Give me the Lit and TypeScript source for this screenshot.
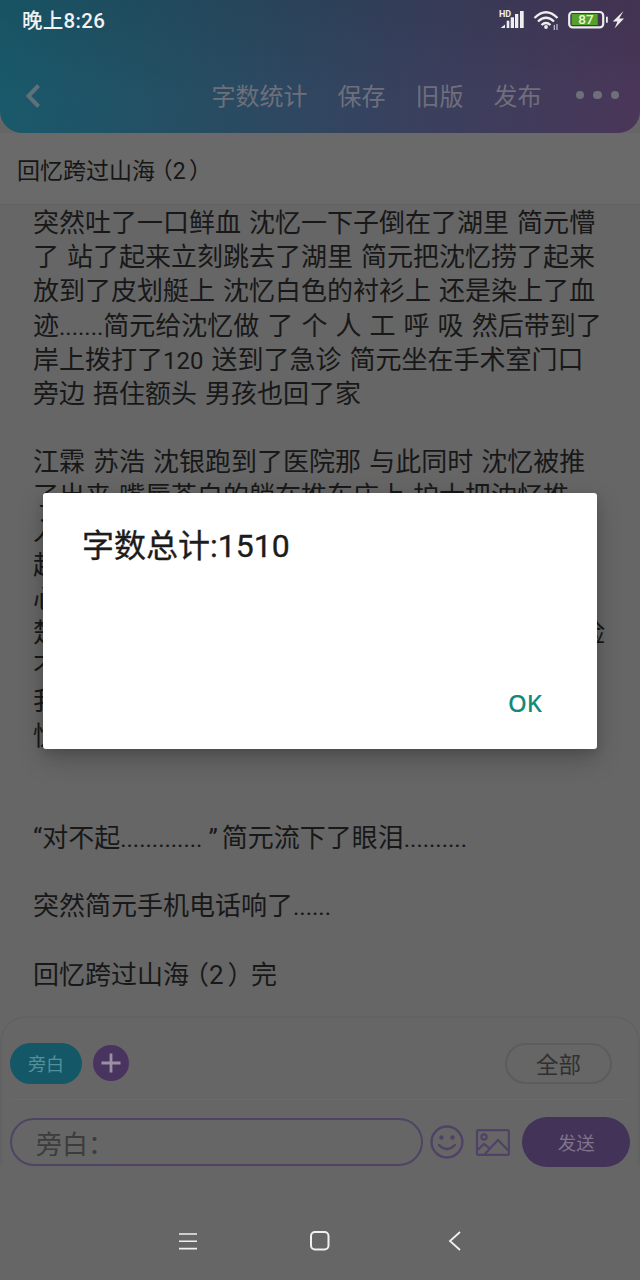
import { LitElement, html, css } from "lit";
import { customElement } from "lit/decorators.js";

const LINES = [
  "突然吐了一口鲜血 沈忆一下子倒在了湖里 简元懵",
  "了 站了起来立刻跳去了湖里 简元把沈忆捞了起来",
  "放到了皮划艇上 沈忆白色的衬衫上 还是染上了血",
  "迹.......简元给沈忆做 了 个 人 工 呼 吸 然后带到了",
  "岸上拨打了120 送到了急诊 简元坐在手术室门口",
  "旁边 捂住额头 男孩也回了家",
  "",
  "江霖 苏浩 沈银跑到了医院那 与此同时 沈忆被推",
  "了出来 嘴唇苍白的躺在推车床上 护士把沈忆推",
  "入病房 简元看着沈忆苍白的脸 眼泪止不住地流",
  "起来 他握住沈忆的手 一句话也说不出来 他的",
  "心里很难受 他不知道该怎么办才好 只能静静地",
  "楚楚可怜的看着沈忆他轻轻地抚摸着沈忆苍白的脸",
  "不知过了多久 沈忆还是没有醒来 简元低声说",
  "我真的好想你 你快点醒来好不好 他的声音",
  "忧伤而又无力",
  "",
  "",
  "“对不起.............”简元流下了眼泪..........",
  "",
  "突然简元手机电话响了......",
  "",
  "回忆跨过山海（2）完",
];

const runClass = (p: string) =>
  p === "”" ? "q" : p === "（" ? "po" : p === "）" ? "pc" : p === "2" ? "d" : "n";

const latin = (s: string) =>
  s
    .split(/([0-9.]+|”|（|）)/)
    .map((p, i) => (i % 2 ? html`<span class=${runClass(p)}>${p}</span>` : p));

@customElement("app-root")
export class AppRoot extends LitElement {
  static styles = css`
    :host {
      display: block;
      width: 640px;
      height: 1280px;
      overflow: hidden;
      font-family: "Noto Sans CJK SC", "Noto Sans", sans-serif;
    }
    .phone {
      position: relative;
      display: flex;
      flex-direction: column;
      width: 640px;
      height: 1280px;
      background: #666;
    }
    .top {
      flex: none;
      height: 133px;
      box-sizing: border-box;
      border-radius: 0 0 22px 22px;
      background: linear-gradient(180deg, rgba(0, 0, 0, 0.08), rgba(0, 0, 0, 0) 75%),
        linear-gradient(96deg, #185a6b 0%, #284c62 35%, #39405e 65%, #4a3658 100%);
      display: flex;
      flex-direction: column;
    }
    .status {
      height: 40px;
      padding: 0 14px 0 22px;
      display: flex;
      align-items: center;
      justify-content: space-between;
      color: #f2f2f2;
    }
    .clock {
      font-family: Roboto, "Noto Sans CJK SC", sans-serif;
      font-size: 20.5px;
      font-weight: 500;
      letter-spacing: 0.3px;
      margin-top: -2px;
    }
    .status-icons {
      display: block;
    }
    .actions {
      flex: 1;
      display: flex;
      align-items: center;
      padding: 19px 21px 0 24px;
      color: #6f6f7c;
      font-size: 24px;
    }
    .back {
      margin-right: auto;
      display: block;
    }
    .act {
      margin-left: 30px;
      margin-top: -3px;
      white-space: nowrap;
    }
    .dots {
      margin-left: 34px;
      display: flex;
      gap: 9px;
      margin-top: -2px;
    }
    .dots i {
      width: 8.5px;
      height: 8.5px;
      border-radius: 50%;
      background: #6f6f7c;
      display: block;
    }
    .title {
      flex: none;
      height: 72px;
      box-sizing: border-box;
      padding: 0 0 0 17px;
      display: flex;
      align-items: center;
      font-family: Roboto, "Noto Sans CJK SC", sans-serif;
      font-size: 23px;
      color: #161616;
      border-bottom: 1px solid #626262;
      background: #6a6a6a;
    }
    .title span {
      display: inline-block;
    }
    .body {
      flex: none;
      height: 812px;
      padding: 1px 0 0 33px;
      box-sizing: border-box;
    }
    .ln {
      height: 34.18px;
      line-height: 34.18px;
      font-family: Roboto, "Noto Sans CJK SC", sans-serif;
      font-size: 26px;
      word-spacing: 1.6px;
      color: #181818;
      white-space: nowrap;
    }
    .n {
      font-size: 0.923em;
    }
    .d {
      font-size: 1em;
    }
    .q {
      padding: 0 4px 0 6px;
    }
    .po {
      margin-left: -0.23em;
    }
    .pc {
      margin: 0 -0.1em 0 0.15em;
    }
    .panel {
      flex: none;
      height: 150px;
      box-sizing: border-box;
      margin-top: -1px;
      border: 2px solid #626262;
      border-bottom: 0;
      border-radius: 26px 26px 0 0;
      display: flex;
      flex-direction: column;
      padding: 24px 8px 0 8px;
    }
    .row1 {
      height: 42px;
      display: flex;
      align-items: center;
    }
    .chip {
      width: 72px;
      height: 41px;
      border-radius: 21px;
      background: #145766;
      color: #55909a;
      font-size: 18px;
      display: flex;
      align-items: center;
      justify-content: center;
    }
    .plus {
      width: 36px;
      height: 36px;
      margin-left: 11px;
      display: block;
    }
    .all {
      margin-left: auto;
      margin-right: 18px;
      width: 107px;
      height: 41px;
      box-sizing: border-box;
      border: 2px solid #5c5c5c;
      border-radius: 21px;
      color: #303030;
      font-size: 22.5px;
      display: flex;
      align-items: center;
      justify-content: center;
    }
    .divider {
      height: 1px;
      margin: 15px 0 18px;
      background: #6a6a6a;
    }
    .row2 {
      height: 48px;
      display: flex;
      align-items: center;
    }
    .input {
      width: 414px;
      height: 48px;
      box-sizing: border-box;
      border: 2px solid #4f4464;
      border-radius: 24px;
      color: #3c3c3c;
      font-size: 26px;
      display: flex;
      align-items: center;
      padding-left: 24px;
    }
    .smile {
      margin-left: 7px;
      display: block;
    }
    .pic {
      margin-left: 11px;
      display: block;
    }
    .send {
      margin-left: 12px;
      width: 108px;
      height: 50px;
      border-radius: 25px;
      background: #433358;
      color: #7f748c;
      font-size: 18.5px;
      display: flex;
      align-items: center;
      justify-content: center;
    }
    .nav {
      flex: 1;
      display: flex;
      align-items: center;
      justify-content: center;
      gap: 112px;
      padding-top: 36px;
      padding-left: 3px;
    }
    .nav svg {
      display: block;
    }
    .nav svg:last-child {
      margin-left: 3px;
    }
    .dialog {
      position: absolute;
      left: 43px;
      top: 493px;
      width: 554px;
      height: 256px;
      background: #fff;
      border-radius: 3px;
      box-shadow: 0 10px 26px rgba(0, 0, 0, 0.22), 0 4px 10px rgba(0, 0, 0, 0.1);
      display: flex;
      flex-direction: column;
      box-sizing: border-box;
      padding: 33px 24px 0 39px;
    }
    .dlg-text {
      font-family: Roboto, "Noto Sans CJK SC", sans-serif;
      font-size: 32px;
      font-weight: 400;
      -webkit-text-stroke: 0.35px #1c1c1c;
      line-height: 40px;
      color: #1c1c1c;
    }
    .ok {
      margin-top: auto;
      margin-bottom: 28px;
      align-self: flex-end;
      padding-right: 31px;
      font-family: "Noto Sans", sans-serif;
      font-weight: 500;
      font-size: 24px;
      line-height: 36px;
      color: #12897a;
    }
  `;

  render() {
    return html`
      <div class="phone">
        <div class="top">
          <div class="status">
            <span class="clock">晚上8:26</span>
            <svg class="status-icons" width="128" height="24" viewBox="0 0 128 24">
              <text x="1" y="9" font-size="9" font-weight="700" font-family="Roboto, sans-serif" fill="#eee">HD</text>
              <path d="M2.7 20 L7 16.5 V20Z" fill="#eee"/>
              <rect x="8.7" y="12.7" width="2.6" height="7.3" fill="#eee"/>
              <rect x="12.7" y="9.3" width="3.3" height="10.7" fill="#eee"/>
              <rect x="17" y="6" width="3.3" height="14" fill="#eee"/>
              <rect x="22" y="3" width="3.7" height="17" fill="#eee"/>
              <g fill="none" stroke="#eee" stroke-width="2.3">
                <path d="M36.5 10 Q48 -1.5 59.5 10"/>
                <path d="M40 13.5 Q48 6 56 13.5"/>
                <path d="M43.5 17 Q48 13 52.5 17"/>
              </g>
              <circle cx="48" cy="19" r="1.9" fill="#eee"/>
              <path d="M56.3 17v5M59 16v6" stroke="#c4c4cc" stroke-width="1.2"/>
              <rect x="71.2" y="4" width="34" height="15.4" rx="3.5" fill="none" stroke="#ececec" stroke-width="2.2"/>
              <rect x="73.7" y="6" width="26" height="11" fill="#54a02a"/>
              <text x="88" y="16.3" text-anchor="middle" font-size="13.5" font-weight="500" font-family="Roboto, sans-serif" fill="#e8f7d8">87</text>
              <rect x="108" y="8.7" width="1.8" height="6" fill="#ececec"/>
              <path d="M125.5 3 L114.7 13.5 H119.5 L116.5 20.5 L126 10.5 H121.2Z" fill="#ececec"/>
            </svg>
          </div>
          <div class="actions">
            <svg class="back" width="18" height="26" viewBox="0 0 18 26">
              <path d="M14.5 2.5 L4.5 13 L14.5 23.5" fill="none" stroke="#5f7078" stroke-width="4"/>
            </svg>
            <span class="act">字数统计</span>
            <span class="act">保存</span>
            <span class="act">旧版</span>
            <span class="act">发布</span>
            <span class="dots"><i></i><i></i><i></i></span>
          </div>
        </div>
        <div class="title"><span>${latin("回忆跨过山海（2）")}</span></div>
        <div class="body">
          ${LINES.map((l) => html`<div class="ln">${latin(l)}</div>`)}
        </div>
        <div class="panel">
          <div class="row1">
            <span class="chip">旁白</span>
            <svg class="plus" viewBox="0 0 36 36">
              <circle cx="18" cy="18" r="18" fill="#493460"/>
              <path d="M18 8.5v19M8.5 18h19" stroke="#9a90a4" stroke-width="2.8"/>
            </svg>
            <span class="all">全部</span>
          </div>
          <div class="divider"></div>
          <div class="row2">
            <div class="input">旁白：</div>
            <svg class="smile" width="34" height="34" viewBox="0 0 34 34" fill="none" stroke="#4f4266" stroke-width="2.4">
              <circle cx="17" cy="17" r="15.5"/>
              <path d="M9 20 Q17 28 25 20" stroke-linecap="round"/>
              <circle cx="11.5" cy="12.5" r="1" fill="#4f4266"/>
              <circle cx="22.5" cy="12.5" r="1" fill="#4f4266"/>
            </svg>
            <svg class="pic" width="36" height="30" viewBox="0 0 36 30" fill="none" stroke="#4f4266" stroke-width="2.2">
              <rect x="2" y="3" width="32" height="25" rx="1.5"/>
              <circle cx="9" cy="10" r="2.6"/>
              <path d="M2.5 23 L9 17 L14 21 M9 28 L23 13 L34 24"/>
            </svg>
            <span class="send">发送</span>
          </div>
        </div>
        <div class="nav">
          <svg width="20" height="20" viewBox="0 0 20 20">
            <path d="M1 3h18M1 10.2h18M1 17.6h18" stroke="#f0f0f0" stroke-width="1.6"/>
          </svg>
          <svg width="20" height="20" viewBox="0 0 20 20">
            <rect x="1" y="1" width="17.5" height="17.5" rx="4" fill="none" stroke="#f0f0f0" stroke-width="2"/>
          </svg>
          <svg width="20" height="20" viewBox="0 0 20 20">
            <path d="M15 1 L5 10 L15 19" fill="none" stroke="#f0f0f0" stroke-width="1.8"/>
          </svg>
        </div>
        <div class="dialog">
          <div class="dlg-text">字数总计:1510</div>
          <div class="ok">OK</div>
        </div>
      </div>
    `;
  }
}
